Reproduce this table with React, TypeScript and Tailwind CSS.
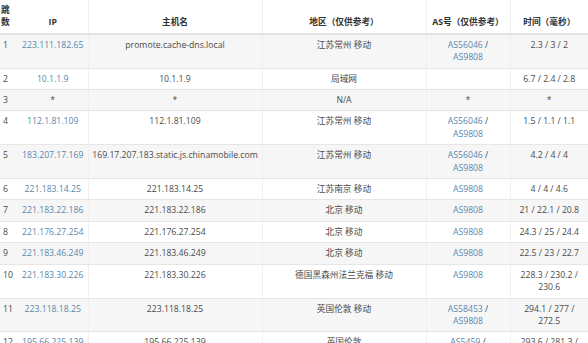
import React from 'react';

type Hop = {
  n: number;
  ip: string;
  host: string;
  region: string;
  as: string[];
  time: string[];
};

const hops: Hop[] = [
  { n: 1, ip: '223.111.182.65', host: 'promote.cache-dns.local', region: '江苏常州 移动', as: ['AS56046', 'AS9808'], time: ['2.3 / 3 / 2'] },
  { n: 2, ip: '10.1.1.9', host: '10.1.1.9', region: '局域网', as: [], time: ['6.7 / 2.4 / 2.8'] },
  { n: 3, ip: '*', host: '*', region: 'N/A', as: ['*'], time: ['*'] },
  { n: 4, ip: '112.1.81.109', host: '112.1.81.109', region: '江苏常州 移动', as: ['AS56046', 'AS9808'], time: ['1.5 / 1.1 / 1.1'] },
  { n: 5, ip: '183.207.17.169', host: '169.17.207.183.static.js.chinamobile.com', region: '江苏常州 移动', as: ['AS56046', 'AS9808'], time: ['4.2 / 4 / 4'] },
  { n: 6, ip: '221.183.14.25', host: '221.183.14.25', region: '江苏南京 移动', as: ['AS9808'], time: ['4 / 4 / 4.6'] },
  { n: 7, ip: '221.183.22.186', host: '221.183.22.186', region: '北京 移动', as: ['AS9808'], time: ['21 / 22.1 / 20.8'] },
  { n: 8, ip: '221.176.27.254', host: '221.176.27.254', region: '北京 移动', as: ['AS9808'], time: ['24.3 / 25 / 24.4'] },
  { n: 9, ip: '221.183.46.249', host: '221.183.46.249', region: '北京 移动', as: ['AS9808'], time: ['22.5 / 23 / 22.7'] },
  { n: 10, ip: '221.183.30.226', host: '221.183.30.226', region: '德国黑森州法兰克福 移动', as: ['AS9808'], time: ['228.3 / 230.2 /', '230.6'] },
  { n: 11, ip: '223.118.18.25', host: '223.118.18.25', region: '英国伦敦 移动', as: ['AS58453', 'AS9808'], time: ['294.1 / 277 /', '272.5'] },
  { n: 12, ip: '195.66.225.139', host: '195.66.225.139', region: '英国伦敦', as: ['AS5459', 'AS9808'], time: ['293.6 / 281.3 /', '277.1'] },
];

const font = { fontFamily: '"Open Sans", "Noto Sans CJK SC", sans-serif' };

function AsCell({ list }: { list: string[] }) {
  if (list.length === 0) return null;
  if (list[0] === '*') return <span>*</span>;
  return (
    <>
      {list.map((a, i) => (
        <div key={a}>
          <span className="text-[#5a87ad]">{a}</span>
          {i < list.length - 1 && <span> /</span>}
        </div>
      ))}
    </>
  );
}

export default function App() {
  const th = 'px-[3px] py-[4px] align-bottom font-bold text-center border-b-2 border-[#e2e2e2] border-r border-r-[#f0f0f0]';
  const td = 'px-[3px] py-[4px] align-top text-center border-b border-[#e6e6e6] border-r border-r-[#f0f0f0]';

  return (
    <div className="w-[588px] h-[343px] overflow-hidden bg-white" style={font}>
      <table className="w-[588px] table-fixed border-collapse text-[8.7px] leading-[12.4px] text-[#4a4a4a]">
        <colgroup>
          <col className="w-[18px]" />
          <col className="w-[70px]" />
          <col className="w-[174px]" />
          <col className="w-[164px]" />
          <col className="w-[84px]" />
          <col className="w-[78px]" />
        </colgroup>
        <thead>
          <tr className="bg-white text-[#333]">
            <th className="pl-[1px] pr-[2px] py-[4px] align-bottom font-bold text-left border-b-2 border-[#e2e2e2]">跳数</th>
            <th className={th}>IP</th>
            <th className={th}>主机名</th>
            <th className={th}>地区（仅供参考）</th>
            <th className={th}>AS号（仅供参考）</th>
            <th className="px-[3px] py-[4px] align-bottom font-bold text-center border-b-2 border-[#e2e2e2]">时间（毫秒）</th>
          </tr>
        </thead>
        <tbody>
          {hops.map((h, i) => (
            <tr key={h.n} className={i % 2 === 0 ? 'bg-[#f6f6f6]' : 'bg-white'}>
              <td className="pl-[3px] pr-0 py-[4px] align-top text-left border-b border-[#e6e6e6]">{h.n}</td>
              <td className={`${td} ${h.ip === '*' ? '' : 'text-[#5a87ad]'}`}>{h.ip}</td>
              <td className={`${td} whitespace-nowrap`}>{h.host}</td>
              <td className={td}>{h.region}</td>
              <td className={td}>
                <AsCell list={h.as} />
              </td>
              <td className="px-[3px] py-[4px] align-top text-center border-b border-[#e6e6e6]">
                {h.time.map((t) => (
                  <div key={t}>{t}</div>
                ))}
              </td>
            </tr>
          ))}
        </tbody>
      </table>
    </div>
  );
}
